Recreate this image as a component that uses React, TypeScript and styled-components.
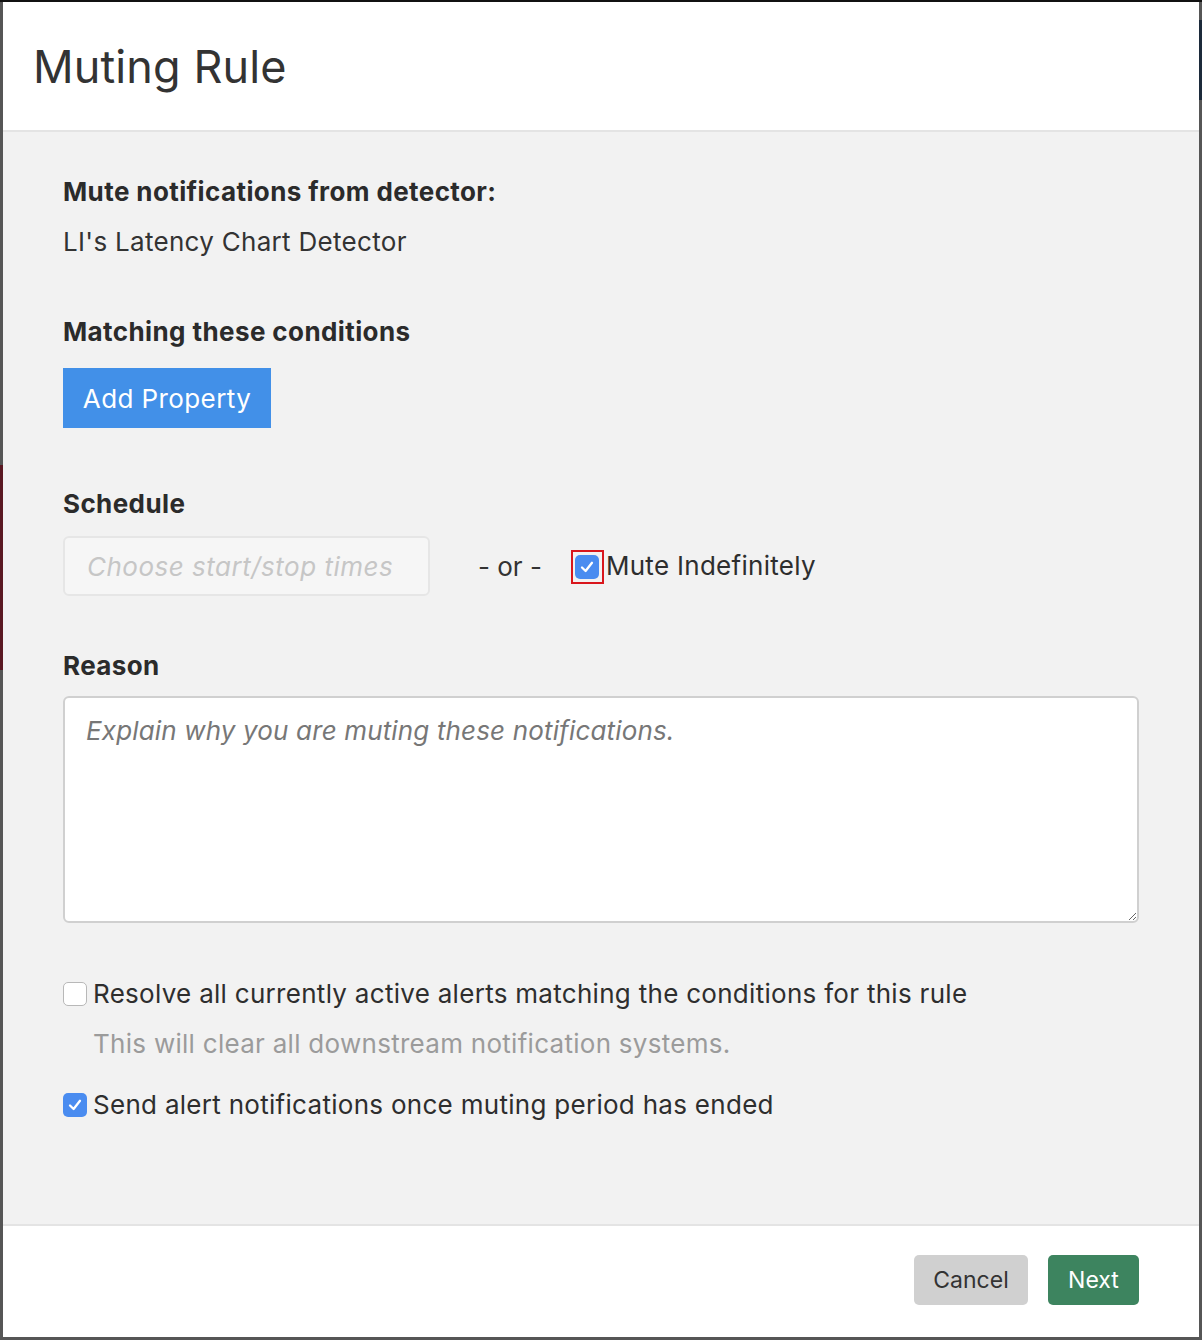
import React from "react";
import styled, { createGlobalStyle } from "styled-components";

const GlobalStyle = createGlobalStyle`
  html, body { margin: 0; padding: 0; }
  body {
    background: #555;
    font-family: Inter, "Noto Sans", "Liberation Sans", sans-serif;
    color: #333;
  }
  * { box-sizing: border-box; }
`;

const Page = styled.div`
  width: 1202px;
  height: 1340px;
  padding: 2px 3px 3px 3px;
  background:
    linear-gradient(#111, #111) 0 0 / 100% 2px no-repeat,
    linear-gradient(#5a1822, #5a1822) 0 465px / 3px 205px no-repeat,
    linear-gradient(#1c2a3a, #1c2a3a) right 0 top 20px / 3px 80px no-repeat,
    #565656;
`;

const Modal = styled.div`
  height: 100%;
  display: flex;
  flex-direction: column;
  background: #fff;
`;

const Header = styled.header`
  height: 130px;
  flex: none;
  display: flex;
  align-items: center;
  padding: 0 30px 0;
  border-bottom: 2px solid #e4e4e4;
  background: #fff;
`;

const Title = styled.h1`
  margin: 0;
  font-size: 45px;
  font-weight: 400;
  color: #333;
  letter-spacing: 0.1px;
`;

const Body = styled.div`
  flex: 1;
  background: #f2f2f2;
  padding: 45px 60px 0;
  display: flex;
  flex-direction: column;
`;

const Label = styled.div<{ $mt?: number }>`
  font-size: 26px;
  line-height: 30px;
  font-weight: 700;
  color: #2b2b2b;
  margin-top: ${(p) => p.$mt ?? 0}px;
  letter-spacing: 0.4px;
`;

const Value = styled.div<{ $mt?: number }>`
  font-size: 26px;
  line-height: 30px;
  color: #333;
  margin-top: ${(p) => p.$mt ?? 0}px;
  letter-spacing: 0.3px;
`;

const PrimaryButton = styled.button`
  align-self: flex-start;
  margin-top: 21px;
  height: 60px;
  width: 208px;
  border: none;
  border-radius: 0;
  background: #4290e8;
  color: #fff;
  font-family: inherit;
  font-size: 26px;
  padding: 0;
  letter-spacing: 0.4px;
`;

const ScheduleRow = styled.div`
  margin-top: 17px;
  display: flex;
  align-items: center;
  height: 60px;
`;

const DateInput = styled.div`
  width: 367px;
  height: 60px;
  border: 2px solid #e6e6e6;
  border-radius: 6px;
  background: #f6f6f6;
  display: flex;
  align-items: center;
  padding-left: 22px;
  font-size: 26px;
  font-style: italic;
  color: #c6c6c6;
  letter-spacing: 0.5px;
`;

const OrText = styled.span`
  margin-left: 48px;
  font-size: 26px;
  color: #333;
`;

const HighlightBox = styled.span`
  margin-left: 29px;
  width: 33px;
  height: 34px;
  border: 2px solid #d9161c;
  display: inline-flex;
  align-items: center;
  justify-content: center;
  margin-top: 2px;
`;

const Box = styled.span<{ $checked?: boolean }>`
  width: 24px;
  height: 24px;
  flex: none;
  border-radius: 5px;
  display: inline-flex;
  align-items: center;
  justify-content: center;
  background: ${(p) => (p.$checked ? "#4a8cf0" : "#fff")};
  border: ${(p) => (p.$checked ? "none" : "1.5px solid #b8b8b8")};
`;

const CheckLabel = styled.span<{ $ml?: number }>`
  margin-left: ${(p) => p.$ml ?? 6}px;
  font-size: 26px;
  line-height: 30px;
  color: #2e2e2e;
  letter-spacing: 0.29px;
`;

const TextArea = styled.textarea`
  margin-top: 15px;
  width: 1076px;
  height: 227px;
  flex: none;
  border: 2px solid #d0d0d0;
  border-radius: 6px;
  background: #fff;
  padding: 17px 21px;
  font-family: inherit;
  font-size: 26px;
  line-height: 32px;
  color: #333;
  letter-spacing: 0.15px;
  outline: none;
  &::placeholder {
    font-style: italic;
    color: #777;
  }
`;

const CheckRow = styled.label<{ $mt: number }>`
  margin-top: ${(p) => p.$mt}px;
  display: flex;
  align-items: center;
  height: 30px;
`;

const Helper = styled.div`
  margin-top: 20px;
  margin-left: 30px;
  font-size: 26px;
  line-height: 30px;
  color: #9b9b9b;
  letter-spacing: 0.28px;
`;

const Footer = styled.footer`
  height: 113px;
  flex: none;
  border-top: 2px solid #e4e4e4;
  background: #fff;
  display: flex;
  justify-content: flex-end;
  align-items: flex-start;
  gap: 20px;
  padding: 29px 60px 0;
`;

const FooterButton = styled.button<{ $variant: "cancel" | "next" }>`
  height: 50px;
  width: ${(p) => (p.$variant === "cancel" ? 114 : 91)}px;
  border: none;
  border-radius: 5px;
  font-family: inherit;
  font-size: 23px;
  padding: 0;
  background: ${(p) => (p.$variant === "cancel" ? "#d0d0d0" : "#3d845f")};
  color: ${(p) => (p.$variant === "cancel" ? "#333" : "#fff")};
`;

const Check = () => (
  <svg width="18" height="18" viewBox="0 0 18 18">
    <polyline points="4,9.5 7.6,13 14,4.8" fill="none" stroke="#fff" strokeWidth="2.3" strokeLinecap="round" strokeLinejoin="round" />
  </svg>
);

export default function App() {
  return (
    <>
      <GlobalStyle />
      <Page>
        <Modal>
          <Header>
            <Title>Muting Rule</Title>
          </Header>
          <Body>
            <Label>Mute notifications from detector:</Label>
            <Value $mt={20}>LI's Latency Chart Detector</Value>
            <Label $mt={60}>Matching these conditions</Label>
            <PrimaryButton>Add Property</PrimaryButton>
            <Label $mt={61}>Schedule</Label>
            <ScheduleRow>
              <DateInput>Choose start/stop times</DateInput>
              <OrText>- or -</OrText>
              <HighlightBox>
                <Box $checked>
                  <Check />
                </Box>
              </HighlightBox>
              <CheckLabel $ml={2}>Mute Indefinitely</CheckLabel>
            </ScheduleRow>
            <Label $mt={55}>Reason</Label>
            <TextArea placeholder="Explain why you are muting these notifications." />
            <CheckRow $mt={56}>
              <Box />
              <CheckLabel>Resolve all currently active alerts matching the conditions for this rule</CheckLabel>
            </CheckRow>
            <Helper>This will clear all downstream notification systems.</Helper>
            <CheckRow $mt={31}>
              <Box $checked>
                <Check />
              </Box>
              <CheckLabel>Send alert notifications once muting period has ended</CheckLabel>
            </CheckRow>
          </Body>
          <Footer>
            <FooterButton $variant="cancel">Cancel</FooterButton>
            <FooterButton $variant="next">Next</FooterButton>
          </Footer>
        </Modal>
      </Page>
    </>
  );
}
